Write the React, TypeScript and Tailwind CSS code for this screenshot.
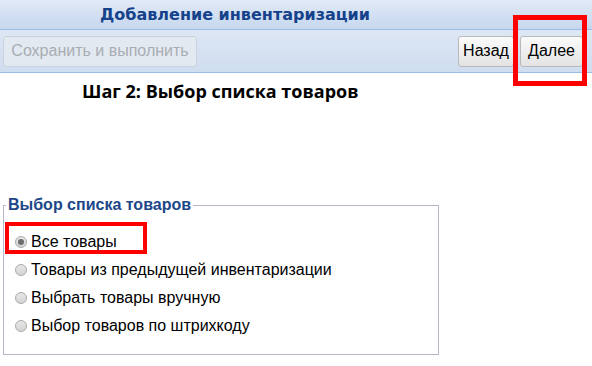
import React from "react"

const options = [
  { label: "Все товары", checked: true },
  { label: "Товары из предыдущей инвентаризации", checked: false },
  { label: "Выбрать товары вручную", checked: false },
  { label: "Выбор товаров по штрихкоду", checked: false },
]

function Radio({ checked }: { checked: boolean }) {
  return (
    <span className="w-[12px] h-[12px] rounded-full border border-[#a9a9a9] bg-gradient-to-b from-[#e8e8e8] to-[#d4d4d4] flex items-center justify-center shrink-0">
      {checked && <span className="w-[6px] h-[6px] rounded-full bg-[#6d6d6d]" />}
    </span>
  )
}

export default function App() {
  return (
    <div className="relative w-[592px] h-[366px] bg-white overflow-hidden font-['Liberation_Sans',Arial,sans-serif]">
      <div className="h-[30px] border-b border-[#99bbe8] bg-gradient-to-b from-[#e2eaf6] via-[#d3e0f2] to-[#c7d7ee] pl-[100px] flex items-center">
        <span className="font-['DejaVu_Sans',Verdana,sans-serif] font-bold text-[16px] text-[#15428b]">
          Добавление инвентаризации
        </span>
      </div>

      <div className="h-[43px] border-b border-[#99bbe8] bg-gradient-to-b from-[#dde7f4] to-[#cfddf0] flex items-center justify-between pl-[3px] pr-[9px]">
        <button className="h-[31px] w-[194px] rounded-[3px] border border-[#c9d2dd] bg-[#e3e9f1] text-[16px] text-[#a8adb3]">
          Сохранить и выполнить
        </button>
        <div className="flex gap-[6px]">
          <button className="h-[31px] w-[56px] rounded-[3px] border border-[#b9b9b9] bg-gradient-to-b from-[#fbfbfb] to-[#e3e3e3] text-[16px] text-black">
            Назад
          </button>
          <button className="h-[31px] w-[63px] rounded-[3px] border border-[#b9b9b9] bg-gradient-to-b from-[#fbfbfb] to-[#e3e3e3] text-[16px] text-black">
            Далее
          </button>
        </div>
      </div>

      <h2 className="mt-[5px] pl-[82px] font-['Open_Sans',sans-serif] font-bold text-[18px] text-black leading-[26px]">
        Шаг 2: Выбор списка товаров
      </h2>

      <fieldset className="mt-[93px] ml-[3px] w-[436px] h-[158px] border border-[#b5b8c8] px-[6px] pb-[10px]">
        <legend className="font-bold text-[16px] text-[#1c4788] leading-[16px] px-[2px] -ml-[4px]">
          Выбор списка товаров
        </legend>
        <div className="flex flex-col gap-[10px] pt-[20px] pl-[5px]">
          {options.map((o) => (
            <label key={o.label} className="flex items-center gap-[4px] text-[16px] text-black leading-[18px]">
              <Radio checked={o.checked} />
              {o.label}
            </label>
          ))}
        </div>
      </fieldset>

      <div className="absolute left-[513px] top-[15px] w-[74px] h-[71px] border-[5px] border-[#ff0000]" />
      <div className="absolute left-[5px] top-[222px] w-[142px] h-[32px] border-[4px] border-[#ff0000]" />
    </div>
  )
}
